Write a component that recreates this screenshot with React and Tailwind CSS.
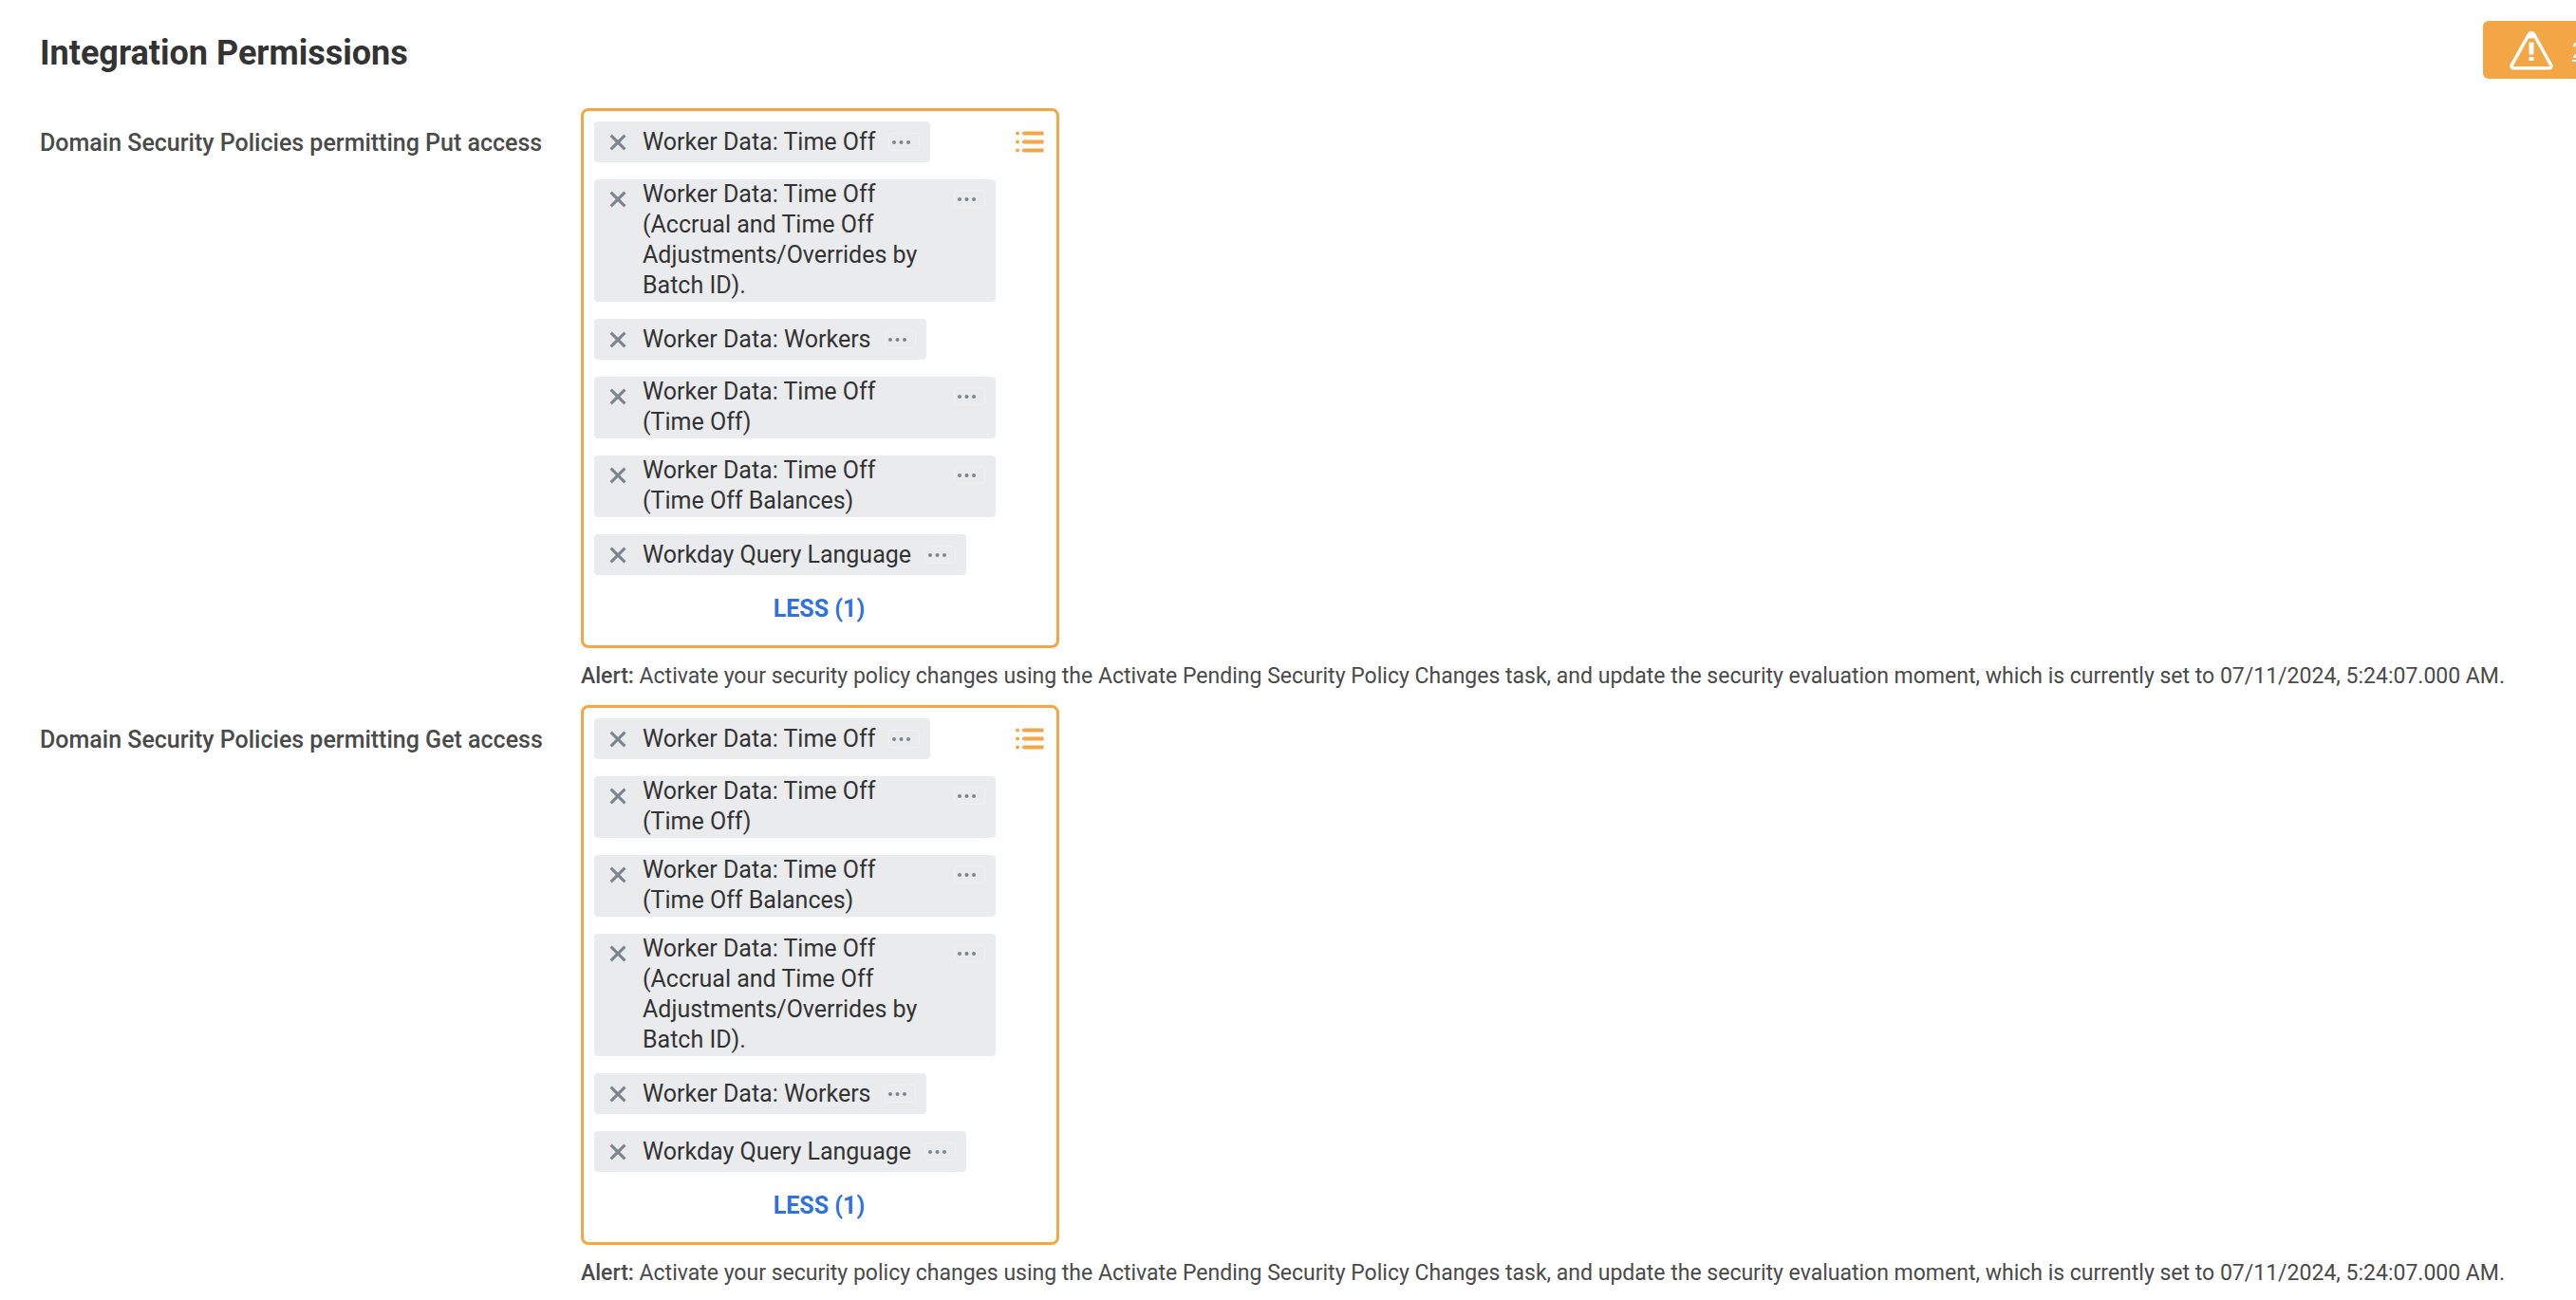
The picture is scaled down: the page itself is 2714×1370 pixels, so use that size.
import React from "react";

const PUT = [
  "Worker Data: Time Off",
  "Worker Data: Time Off (Accrual and Time Off Adjustments/Overrides by Batch ID).",
  "Worker Data: Workers",
  "Worker Data: Time Off (Time Off)",
  "Worker Data: Time Off (Time Off Balances)",
  "Workday Query Language",
];

const GET = [PUT[0], PUT[3], PUT[4], PUT[1], PUT[2], PUT[5]];

function Chip({ text }) {
  const long = text.length > 24;
  return (
    <li
      className={
        long
          ? "flex w-[423px] items-start rounded-sm bg-[#e9ebed] pb-px pl-4"
          : "flex h-[43px] items-center rounded-sm bg-[#e9ebed] pl-4"
      }
    >
      <button type="button" aria-label={"Remove " + text} className={long ? "mt-3 flex w-[35px] shrink-0" : "flex w-[35px] shrink-0"}>
        <svg viewBox="0 0 18 18" className="size-[18px]" fill="none" stroke="#7b858f" strokeWidth="3.1">
          <path d="M1.600 1.600 16.400 16.400M16.400 1.600 1.600 16.400" />
        </svg>
      </button>
      <span className={long ? "w-[300px] text-[25px] leading-8" : "text-[25px] leading-8"}>{text}</span>
      <button
        type="button"
        aria-label={"Related actions for " + text}
        className={
          long
            ? "ml-auto mr-[11px] mt-[11px] flex h-[19px] w-[33px] items-center rounded-sm border border-[#f0f1f2] pl-[3px]"
            : "ml-3.5 mr-[11px] flex h-[19px] w-[33px] items-center rounded-sm border border-[#f0f1f2] pl-[3px]"
        }
      >
        <svg viewBox="0 0 20 4" className="h-1 w-5" fill="#7b858f">
          <circle cx="2" cy="2" r="2" />
          <circle cx="9.5" cy="2" r="2" />
          <circle cx="17" cy="2" r="2" />
        </svg>
      </button>
    </li>
  );
}

function Field({ label, items }) {
  return (
    <div role="group" aria-label={label} className="flex items-start">
      <h2 className="mt-[21px] w-[570px] shrink-0 text-[25px] leading-8 font-medium text-[#4a4a4a]">{label}</h2>
      <div className="min-w-0 grow">
        <div className="flex w-[504px] flex-col rounded-lg border-3 border-[#f2a646] pb-5 pl-[11px] pr-[13px] pt-[11px]">
          <div className="flex items-start justify-between">
            <ul className="flex flex-col items-start gap-[18px] text-[#333333]">
              {items.map((t) => (
                <Chip key={t} text={t} />
              ))}
            </ul>
            <button type="button" aria-label="Open list" className="mt-[10px]">
              <svg viewBox="0 0 30 24" className="h-6 w-[30px]" fill="#f2a646">
                <circle cx="2" cy="2.5" r="2" />
                <circle cx="2" cy="11.5" r="2" />
                <circle cx="2" cy="20.5" r="2" />
                <path d="M9 .5H29.500V4.500H9a2 2 0 0 1 0-4ZM9 9.500H29.500V13.500H9a2 2 0 0 1 0-4ZM9 18.500H29.500V22.500H9a2 2 0 0 1 0-4Z" />
              </svg>
            </button>
          </div>
          <button type="button" className="mt-[18px] self-center text-[25px] leading-9 font-bold text-[#2f72db]">LESS (1)</button>
        </div>
        <p className="mt-3 text-[23px] leading-9 text-[#4a4a4a]">
          <strong className="font-medium">Alert:</strong> Activate your security policy changes using the Activate Pending Security
          Policy Changes task, and update the security evaluation moment, which is currently set to 07/11/2024, 5:24:07.000 AM.
        </p>
      </div>
    </div>
  );
}

export default function App() {
  return (
    <main className="overflow-hidden bg-white pl-[42px] font-['Roboto',sans-serif]">
      <header className="flex items-start justify-between pt-[22px]">
        <h1 className="mt-3 text-4xl leading-[44px] font-bold text-[#333333]">Integration Permissions</h1>
        <a href="#alerts" className="flex h-[61px] w-[98px] items-center overflow-hidden rounded-l-md bg-[#f2a646] pl-7 text-2xl text-white underline">
          <svg viewBox="0 0 46 42" className="h-[42px] w-[46px] shrink-0" fill="none">
            <path d="M20.500 3.800a3 3 0 0 1 5 0L43.600 36.500a2.200 2.200 0 0 1-2 3.300H4.400a2.200 2.200 0 0 1-2-3.300Z" stroke="#fff" strokeWidth="3.500" />
            <path d="M19 6 23 1.500 27 6 25.500 8.500h-5Z" fill="#fff" />
            <path d="M20.500 12.500h5v13h-5zM20.500 28h5v4h-5z" fill="#fff" />
          </svg>
          <span className="ml-5">2</span>
        </a>
      </header>
      <div className="mt-[31px] flex flex-col gap-3">
        <Field label="Domain Security Policies permitting Put access" items={PUT} />
        <Field label="Domain Security Policies permitting Get access" items={GET} />
      </div>
    </main>
  );
}
